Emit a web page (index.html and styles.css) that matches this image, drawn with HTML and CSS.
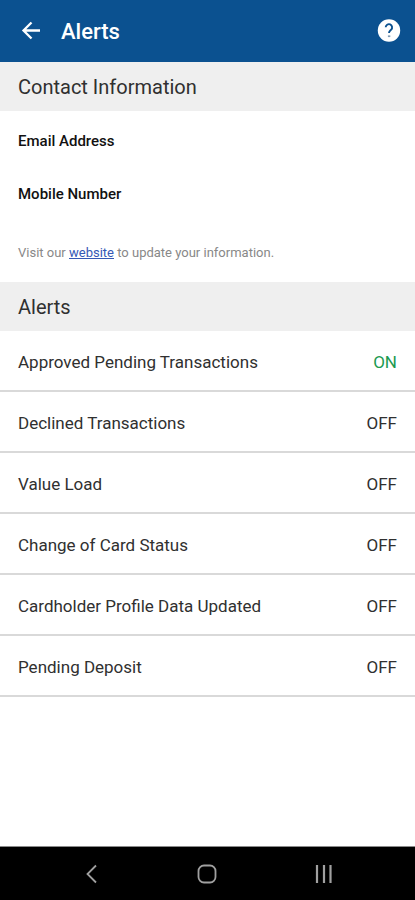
FILE: index.html
```html
<!DOCTYPE html>
<html lang="en">
<head>
<meta charset="utf-8">
<meta name="viewport" content="width=device-width, initial-scale=1">
<title>Alerts</title>
<link rel="stylesheet" href="styles.css">
</head>
<body>
<header class="app-bar">
  <button class="icon-button" type="button" aria-label="Back">
    <svg width="26" height="26" viewBox="0 0 26 26" fill="none" stroke="#fff" stroke-width="2.300"><path d="M22 12.500H6M13.500 4.500l-8 8 8 8"/></svg>
  </button>
  <h1 class="app-title">Alerts</h1>
  <button class="icon-button help" type="button" aria-label="Help">
    <svg width="24" height="24" viewBox="0 0 24 24"><circle cx="12" cy="11.500" r="11.200" fill="#fff"/><path d="M8.700 8.300a3.200 3.200 0 1 1 5.500 2.300c-1.200 1.200-2.200 1.700-2.200 3.400" fill="none" stroke="#0b5190" stroke-width="1.900"/><path d="M10.900 16.400h2.400v1.700h-2.400z" fill="#7f9ab3"/></svg>
  </button>
</header>
<main class="content">
  <h2 class="section-title">Contact Information</h2>
  <section class="contact">
    <h3 class="field">Email Address</h3>
    <h3 class="field">Mobile Number</h3>
    <p class="note">Visit our <a href="#website">website</a> to update your information.</p>
  </section>
  <h2 class="section-title">Alerts</h2>
  <div class="alerts">
    <button class="row" type="button"><span>Approved Pending Transactions</span><span class="on">ON</span></button>
    <button class="row" type="button"><span>Declined Transactions</span><span>OFF</span></button>
    <button class="row" type="button"><span>Value Load</span><span>OFF</span></button>
    <button class="row" type="button"><span>Change of Card Status</span><span>OFF</span></button>
    <button class="row" type="button"><span>Cardholder Profile Data Updated</span><span>OFF</span></button>
    <button class="row" type="button"><span>Pending Deposit</span><span>OFF</span></button>
  </div>
</main>
<nav class="system-nav" aria-label="System">
  <button class="nav-button" type="button" aria-label="Back">
    <svg width="24" height="24" viewBox="0 0 24 24" fill="none" stroke="#a0a0a0" stroke-width="1.800"><path d="M17 3.500L8.500 12l8.500 8.500"/></svg>
  </button>
  <button class="nav-button" type="button" aria-label="Home">
    <svg width="24" height="24" viewBox="0 0 24 24" fill="none" stroke="#a0a0a0" stroke-width="1.800"><rect x="3.500" y="3.500" width="17" height="17" rx="5.500"/></svg>
  </button>
  <button class="nav-button" type="button" aria-label="Recent apps">
    <svg width="24" height="24" viewBox="0 0 24 24" fill="none" stroke="#a0a0a0" stroke-width="2.200"><path d="M5 3v18M12 3v18M18.500 3v18"/></svg>
  </button>
</nav>
</body>
</html>
```
FILE: styles.css
```css
* {
  box-sizing: border-box;
}

body {
  display: flex;
  flex-direction: column;
  min-height: 100vh;
  margin: 0;
  background: #fff;
  color: #303030;
  font-family: Roboto, "Liberation Sans", sans-serif;
}

h1,
h2,
h3,
p {
  margin: 0;
}

button {
  border: 0;
  background: none;
  font: inherit;
  color: inherit;
  cursor: pointer;
}

svg {
  display: block;
}

.app-bar {
  display: flex;
  align-items: center;
  gap: 17px;
  height: 62px;
  padding: 0 14px 0 18px;
  background: #0b5190;
  color: #fff;
}

.icon-button {
  padding: 0;
}

.help {
  margin-left: auto;
}

.app-title {
  padding-top: 2px;
  font-size: 22px;
  font-weight: 500;
  line-height: 28px;
}

.content {
  flex: 1;
}

.section-title {
  padding: 13px 18px 11px;
  background: #efefef;
  font-size: 20px;
  font-weight: 400;
  line-height: 25px;
}

.contact {
  padding: 20px 18px;
}

.field {
  margin-bottom: 33px;
  color: #111;
  font-size: 15px;
  font-weight: 500;
  line-height: 20px;
}

.note {
  padding-top: 6px;
  color: #888;
  font-size: 13px;
  line-height: 19px;
}

.note a {
  color: #3558b5;
}

.row {
  display: flex;
  align-items: center;
  justify-content: space-between;
  width: 100%;
  height: 61px;
  padding: 2px 18px 0;
  border-bottom: 2px solid #d9d9d9;
  font-size: 17px;
  line-height: 24px;
  text-align: left;
}

.on {
  color: #1c9a50;
}

.system-nav {
  display: flex;
  align-items: center;
  justify-content: space-around;
  height: 54px;
  padding: 0 33px;
  border-top: 1px solid #8a8a8a;
  background: #000;
}

.nav-button {
  padding: 0;
}
```
